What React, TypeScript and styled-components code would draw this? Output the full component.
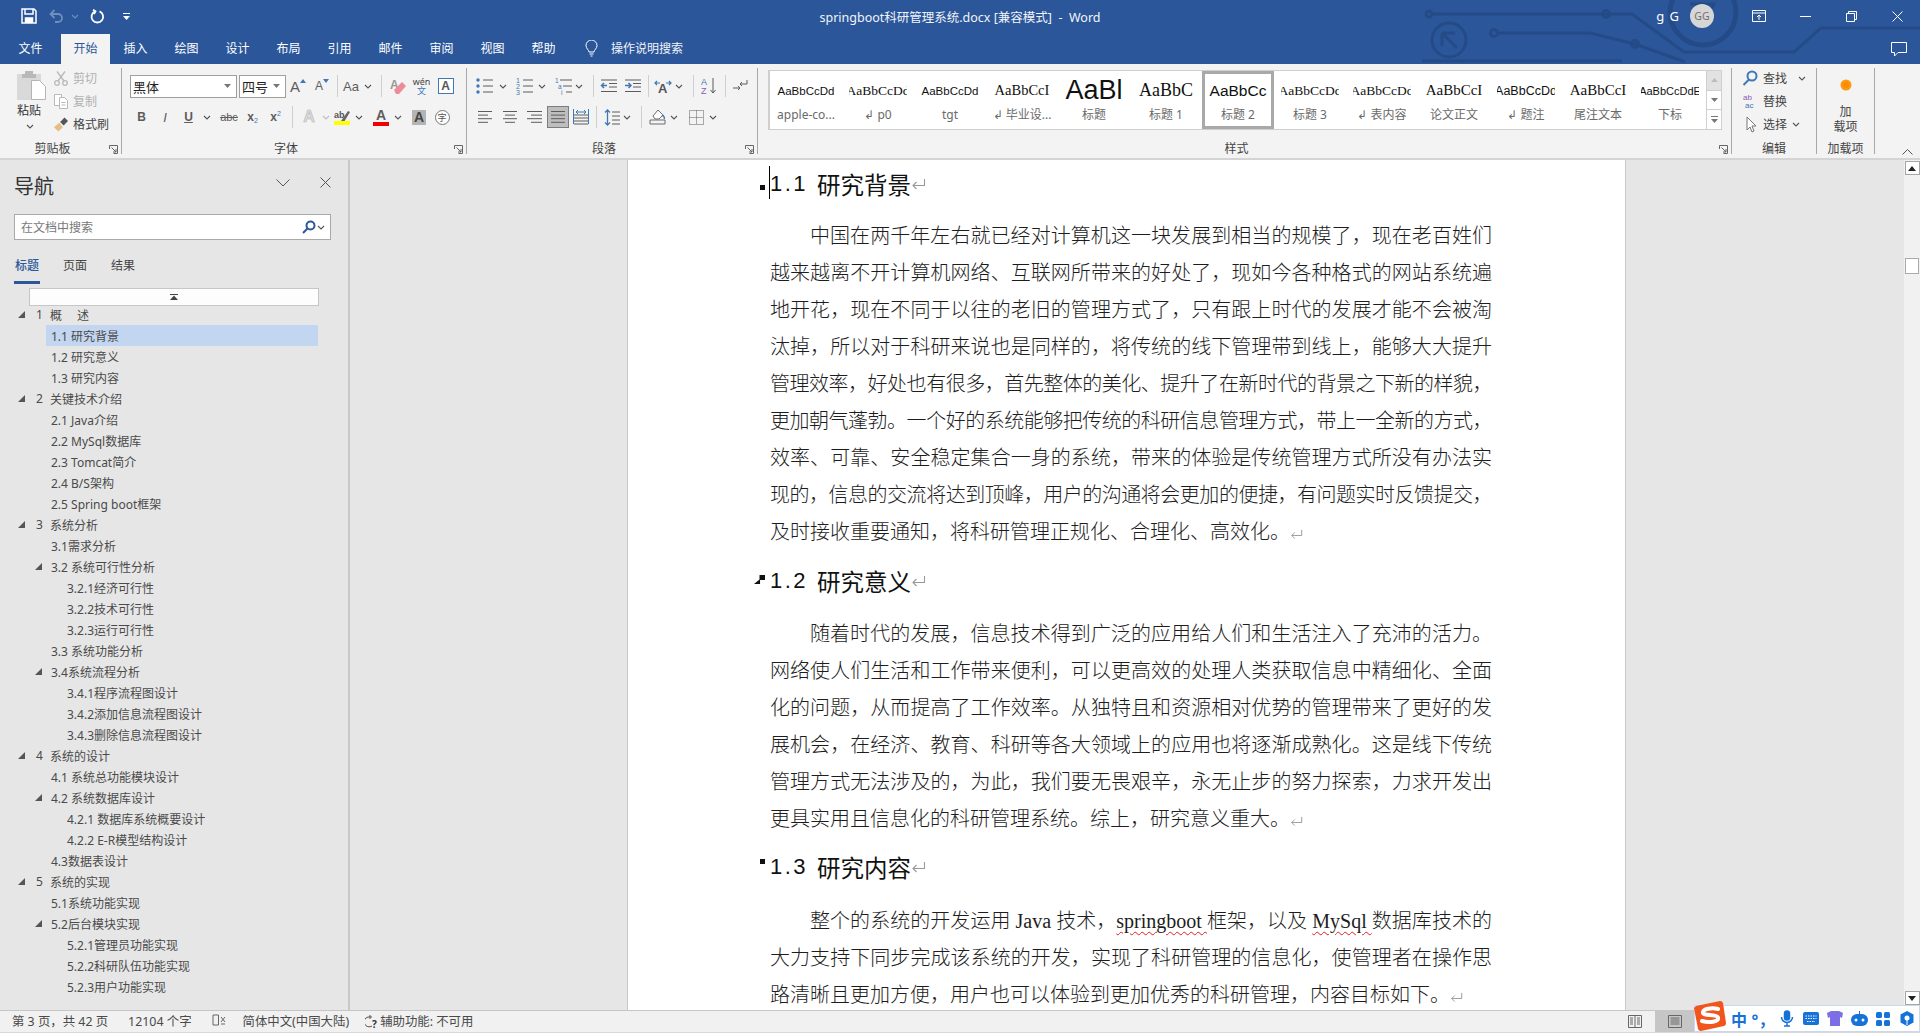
import React from 'react';
import styled, { createGlobalStyle } from 'styled-components';

const UI = `"Noto Sans", "Noto Sans CJK SC", sans-serif`;
const SERIF = `"Liberation Serif", "Noto Sans CJK SC", serif`;
const BLUE = '#2b579a';
const ICON_BLUE = '#3f78b5';
const GREY = '#5c5c5c';

const Global = createGlobalStyle`
  html, body { margin: 0; height: 100%; overflow: hidden; }
  body { font-family: ${UI}; font-size: 12px; color: #444; background: #e6e6e6; }
  * { box-sizing: border-box; }
`;

const App_ = styled.div`
  height: 100vh;
  display: flex;
  flex-direction: column;
  overflow: hidden;
  position: relative;
`;

/* title bar */
const TopBar = styled.header`
  height: 64px;
  flex: none;
  background: ${BLUE};
  color: #fff;
  position: relative;
  overflow: hidden;
`;
const Circuit = styled.svg`
  position: absolute;
  right: 0;
  top: 0;
`;
const TitleRow = styled.div`
  height: 34px;
  padding-bottom: 2px;
  display: grid;
  grid-template-columns: 1fr auto 1fr;
  align-items: center;
  position: relative;
`;
const Qat = styled.div`
  display: flex;
  align-items: center;
  padding-left: 15px;
`;
const QatBtn = styled.span<{ $w: number }>`
  width: ${p => p.$w}px;
  display: flex;
  align-items: center;
  justify-content: center;
`;
const DocTitle = styled.div`
  font-size: 12.5px;
  color: #f1f4f9;
`;
const WinControls = styled.div`
  display: flex;
  align-items: center;
  justify-content: flex-end;
`;
const UserName = styled.span`
  font-size: 13px;
  letter-spacing: 1px;
  margin-right: 10px;
`;
const Avatar = styled.span`
  width: 24px;
  height: 24px;
  border-radius: 50%;
  background: #d6d6d6;
  color: #6f6f6f;
  font-size: 10.5px;
  display: flex;
  align-items: center;
  justify-content: center;
  margin-right: 22px;
`;
const WinBtn = styled.span`
  width: 46px;
  display: flex;
  justify-content: center;
`;
const TabRow = styled.nav`
  height: 30px;
  display: flex;
  align-items: stretch;
  position: relative;
`;
const Tab = styled.span<{ $active?: boolean; $w: number }>`
  width: ${p => p.$w}px;
  display: flex;
  align-items: center;
  justify-content: center;
  padding-bottom: 2px;
  font-size: 12px;
  color: ${p => (p.$active ? BLUE : '#fff')};
  background: ${p => (p.$active ? '#f3f3f3' : 'transparent')};
`;
const TellMe = styled.span`
  display: flex;
  align-items: center;
  gap: 13px;
  margin-left: 16px;
  padding-bottom: 2px;
  font-size: 12px;
  color: #f1f4f9;
`;
const CommentBtn = styled.span`
  margin-left: auto;
  margin-right: 13px;
  display: flex;
  align-items: center;
`;

/* ribbon */
const Ribbon = styled.section`
  height: 96px;
  flex: none;
  background: #f3f3f3;
  border-bottom: 2px solid #d4d4d4;
  display: flex;
  align-items: flex-start;
  padding-top: 4px;
  position: relative;
`;
const Group = styled.div<{ $w: number; $pl?: number }>`
  width: ${p => p.$w}px;
  height: 86px;
  flex: none;
  padding: 5px 0 0 ${p => p.$pl ?? 0}px;
  border-right: 1px solid #a8a8a8;
  display: flex;
  flex-direction: column;
  position: relative;
`;
const GroupLabel = styled.div<{ $plain?: boolean }>`
  position: absolute;
  left: 0;
  right: 0;
  bottom: -3px;
  padding-right: ${p => (p.$plain ? 0 : 16)}px;
  text-align: center;
  font-size: 12px;
  line-height: 16px;
  color: #444;
`;
const Launcher = styled.span`
  position: absolute;
  right: 3px;
  bottom: 0;
  display: flex;
`;
const ToolRows = styled.div`
  display: flex;
  flex-direction: column;
  gap: 5px;
`;
const ToolRow = styled.div`
  height: 26px;
  display: flex;
  align-items: center;
`;
const Tool = styled.span<{ $w?: number; $ml?: number; $active?: boolean }>`
  width: ${p => p.$w ?? 20}px;
  height: ${p => (p.$active ? '22px' : 'auto')};
  margin-left: ${p => p.$ml ?? 0}px;
  flex: none;
  display: flex;
  align-items: center;
  justify-content: center;
  background: ${p => (p.$active ? '#bebebe' : 'transparent')};
  border: ${p => (p.$active ? '1px solid #7d7d7d' : 'none')};
`;
const Sep = styled.span<{ $ml: number }>`
  width: 1px;
  height: 22px;
  flex: none;
  margin-left: ${p => p.$ml}px;
  background: #cfcfcf;
`;
const Select = styled.span<{ $w: number; $ml?: number }>`
  width: ${p => p.$w}px;
  height: 23px;
  flex: none;
  margin-left: ${p => p.$ml ?? 0}px;
  background: #fff;
  border: 1px solid #9f9f9f;
  display: flex;
  align-items: center;
  justify-content: space-between;
  padding: 0 5px 0 2px;
  font-size: 13px;
  color: #222;
`;
const Glyph = styled.span<{ $size?: number; $weight?: number; $color?: string; $italic?: boolean; $deco?: string; $shift?: number }>`
  font-size: ${p => p.$size ?? 14}px;
  font-weight: ${p => p.$weight ?? 400};
  font-style: ${p => (p.$italic ? 'italic' : 'normal')};
  color: ${p => p.$color ?? GREY};
  text-decoration: ${p => p.$deco ?? 'none'};
  margin-top: ${p => p.$shift ?? 0}px;
  line-height: 1;
  font-family: "Liberation Sans", "Noto Sans CJK SC", sans-serif;
`;
const GhostA = styled(Glyph)`
  -webkit-text-stroke: 0.6px #b5b5b5;
`;
const ColorA = styled.span<{ $bar: string }>`
  display: flex;
  flex-direction: column;
  align-items: center;
  width: 16px;
  font: 700 14px/13px "Liberation Sans", sans-serif;
  color: ${GREY};
  &::after {
    content: '';
    width: 16px;
    height: 4px;
    background: ${p => p.$bar};
  }
`;
const ShadedA = styled.span`
  width: 14px;
  height: 15px;
  background: #b4b4b4;
  color: #444;
  font: 700 14px/15px "Liberation Sans", sans-serif;
  text-align: center;
`;
const BoxedA = styled.span`
  width: 16px;
  height: 16px;
  background: #fff;
  border: 1px solid ${ICON_BLUE};
  color: #555;
  font: 700 12px/14px "Liberation Sans", sans-serif;
  text-align: center;
`;
const Ruby = styled.span`
  display: flex;
  flex-direction: column;
  align-items: center;
  font-size: 9px;
  line-height: 9px;
  color: #444;
  & > b {
    font-weight: 400;
    color: ${ICON_BLUE};
  }
`;
const CircledZi = styled.span`
  width: 15px;
  height: 15px;
  border-radius: 50%;
  border: 1px solid #777;
  background: #fff;
  font-size: 9px;
  line-height: 13px;
  text-align: center;
  color: #555;
`;
const ArrowTip = styled.svg`
  margin-bottom: 11px;
`;

const ClipBody = styled.div`
  display: flex;
  padding-left: 17px;
  margin-top: -3px;
`;
const PasteCol = styled.div`
  width: 37px;
  display: flex;
  flex-direction: column;
  align-items: flex-start;
  font-size: 12px;
  color: #333;
  line-height: 14px;
  & > b {
    font-weight: 400;
    margin-top: 4px;
  }
  & > svg:last-child {
    margin: 6px 0 0 9px;
  }
`;
const SmallCmds = styled.div`
  display: flex;
  flex-direction: column;
  gap: 7px;
`;
const SmallCmd = styled.div<{ $off?: boolean; $gap?: number }>`
  height: 16px;
  display: flex;
  align-items: center;
  gap: ${p => p.$gap ?? 5}px;
  font-size: 12px;
  color: ${p => (p.$off ? '#b1b1b1' : '#444')};
`;

const Gallery = styled.div`
  margin: -3px 0 0 10px;
  width: 954px;
  height: 60px;
  display: flex;
  background: #fff;
  border: 1px solid #cfcfcf;
  border-left-width: 2px;
`;
const StyleItem = styled.div<{ $selected?: boolean }>`
  width: 72px;
  flex: none;
  height: 100%;
  display: flex;
  flex-direction: column;
  align-items: center;
  outline: ${p => (p.$selected ? '3px solid #a9a9a9' : 'none')};
  outline-offset: -3px;
`;
const Preview = styled.div<{ $size: number; $serif?: boolean }>`
  width: 58px;
  height: 33px;
  display: flex;
  align-items: center;
  justify-content: center;
  overflow: hidden;
  white-space: nowrap;
  margin-top: 3px;
  color: #111;
  font-size: ${p => p.$size}px;
  font-family: ${p => (p.$serif ? '"Liberation Serif", serif' : '"Liberation Sans", sans-serif')};
`;
const StyleName = styled.div`
  font-size: 12px;
  line-height: 16px;
  color: #6a6a6a;
  white-space: nowrap;
`;
const GalleryScroll = styled.div`
  margin-left: auto;
  width: 16px;
  display: flex;
  flex-direction: column;
  border-left: 1px solid #cfcfcf;
`;
const ScrollCell = styled.span<{ $off?: boolean }>`
  flex: 1;
  display: flex;
  align-items: center;
  justify-content: center;
  background: ${p => (p.$off ? '#e2e2e2' : '#fff')};
  & + & {
    border-top: 1px solid #cfcfcf;
  }
`;
const EditCol = styled.div`
  display: flex;
  flex-direction: column;
  gap: 7px;
  padding-left: 10px;
  margin-top: -3px;
`;
const AddInCol = styled.div`
  display: flex;
  flex-direction: column;
  align-items: center;
  font-size: 12px;
  line-height: 15px;
  color: #444;
  padding-top: 6px;
  & > svg {
    margin-bottom: 13px;
  }
`;
const Collapse = styled.span`
  position: absolute;
  right: 7px;
  bottom: 3px;
  display: flex;
`;

/* main area */
const Main = styled.main`
  flex: 1;
  min-height: 0;
  display: flex;
`;
const NavPane = styled.aside`
  width: 350px;
  flex: none;
  background: #e6e6e6;
  border-right: 2px solid #c8c8c8;
  padding: 0 0 0 14px;
  display: flex;
  flex-direction: column;
`;
const NavHead = styled.div`
  height: 54px;
  display: flex;
  align-items: center;
  padding: 0 17px 4px 0;
  color: #333;
`;
const NavTitle = styled.h2`
  margin: 0 auto 0 0;
  font-size: 20px;
  font-weight: 400;
  color: #333;
`;
const NavHeadBtn = styled.span`
  display: flex;
  margin: 0 0 5px 30px;
`;
const SearchBox = styled.div`
  width: 317px;
  height: 26px;
  background: #fff;
  border: 1px solid #a9a9a9;
  display: flex;
  align-items: center;
  padding: 0 5px 0 6px;
  font-size: 12px;
  color: #787878;
`;
const SearchHint = styled.span`
  margin-right: auto;
`;
const NavTabs = styled.div`
  height: 44px;
  display: flex;
  gap: 22px;
  padding-top: 17px;
`;
const NavTab = styled.span<{ $active?: boolean }>`
  width: 26px;
  height: 27px;
  font-size: 12px;
  line-height: 18px;
  text-align: center;
  color: ${p => (p.$active ? BLUE : '#444')};
  font-weight: ${p => (p.$active ? 500 : 400)};
  border-bottom: 3px solid ${p => (p.$active ? BLUE : 'transparent')};
`;
const CollapseBar = styled.div`
  width: 290px;
  height: 18px;
  margin: 4px 0 0 15px;
  background: #fdfdfd;
  border: 1px solid #c6c6c6;
  display: flex;
  align-items: center;
  justify-content: center;
  flex: none;
`;
const Tree = styled.ul`
  list-style: none;
  margin: -2px 0 0 -14px;
  padding: 0;
`;
const TreeRow = styled.li<{ $level: number; $selected?: boolean }>`
  height: 21px;
  width: 272px;
  margin-left: ${p => (p.$level === 0 ? 14 : 46)}px;
  padding-left: ${p => (p.$level === 0 ? 22 : p.$level === 1 ? 5 : 21)}px;
  display: flex;
  align-items: center;
  white-space: pre;
  font-size: 12px;
  color: #4a4a4a;
  background: ${p => (p.$selected ? '#c2d5f1' : 'transparent')};
  position: relative;
`;
const Expander = styled.svg<{ $level: number }>`
  position: absolute;
  left: ${p => (p.$level === 0 ? 4 : -11)}px;
  top: 7px;
`;
const TreeNum = styled.span`
  width: 14px;
  flex: none;
`;
const DocArea = styled.div`
  flex: 1;
  min-width: 0;
  background: #e6e6e6;
  padding-left: 277px;
  overflow: hidden;
`;
const Page = styled.article`
  width: 999px;
  height: 100%;
  background: #fff;
  border: 1px solid #c8c8c8;
  border-width: 0 1px;
  padding: 5px 0 0 142px;
  font-family: ${SERIF};
  color: #1d1d1d;
  overflow: hidden;
`;
const Heading = styled.h1<{ $above: number; $below: number }>`
  margin: ${p => p.$above}px 0 ${p => p.$below}px;
  height: 37px;
  display: flex;
  align-items: center;
  font-size: 23.5px;
  font-weight: 400;
  color: #111;
  font-family: "Liberation Sans", "Noto Sans CJK SC", sans-serif;
  position: relative;
`;
const HeadNum = styled.span`
  font-size: 22px;
  letter-spacing: 2.5px;
  margin-right: 9px;
`;
const KeepMark = styled.i<{ $top: number; $arrow?: boolean }>`
  position: absolute;
  left: ${p => (p.$arrow ? -16 : -10)}px;
  top: ${p => p.$top}px;
  width: ${p => (p.$arrow ? 11 : 5)}px;
  height: ${p => (p.$arrow ? 9 : 5)}px;
  background: #111;
  clip-path: ${p => (p.$arrow ? 'polygon(0 100%, 55% 100%, 55% 55%, 100% 55%, 100% 0, 50% 0, 50% 50%)' : 'none')};
`;
const Caret = styled.i`
  position: absolute;
  left: -1px;
  top: 1px;
  width: 1px;
  height: 33px;
  background: #000;
`;
const Para = styled.div`
  width: 722px;
`;
const Line = styled.div<{ $indent?: boolean; $last?: boolean; $tight?: boolean }>`
  height: 37px;
  line-height: 37px;
  font-size: 20px;
  font-weight: 300;
  text-indent: ${p => (p.$indent ? '40px' : 0)};
  text-align: justify;
  text-align-last: ${p => (p.$last ? 'left' : 'justify')};
  letter-spacing: ${p => (p.$tight ? '-0.6px' : 0)};
`;
const Spell = styled.span`
  text-decoration: underline wavy #e02020;
  text-decoration-thickness: 1px;
  text-underline-offset: 3px;
`;
const Scrollbar = styled.div`
  width: 16px;
  flex: none;
  background: #f1f1f1;
  display: flex;
  flex-direction: column;
  align-items: center;
  padding: 1px 0 5px;
`;
const ScrollBtn = styled.span`
  width: 15px;
  height: 14px;
  flex: none;
  background: #fff;
  border: 1px solid #a6a6a6;
  display: flex;
  align-items: center;
  justify-content: center;
`;
const Thumb = styled.span`
  width: 14px;
  height: 16px;
  background: #fff;
  border: 1px solid #ababab;
  margin: 83px 0 auto;
`;

/* status bar */
const Status = styled.footer`
  height: 23px;
  flex: none;
  background: #f1f1f1;
  border-top: 1px solid #c6c6c6;
  border-bottom: 1px solid #d8d8d8;
  display: flex;
  align-items: center;
  font-size: 12.4px;
  color: #4a4a4a;
  padding: 0 0 2px 12px;
  position: relative;
  white-space: nowrap;
`;
const StatusItem = styled.span<{ $ml?: number; $gap?: number }>`
  margin-left: ${p => p.$ml ?? 0}px;
  display: flex;
  align-items: center;
  gap: ${p => p.$gap ?? 4}px;
`;
const Views = styled.div`
  position: absolute;
  left: 1620px;
  top: 0;
  bottom: 0;
  display: flex;
  gap: 5px;
`;
const ViewBtn = styled.span<{ $active?: boolean; $w: number }>`
  width: ${p => p.$w}px;
  height: 100%;
  display: flex;
  align-items: center;
  justify-content: center;
  background: ${p => (p.$active ? '#c6c6c6' : 'transparent')};
`;
const Sogou = styled.div`
  position: absolute;
  right: 0;
  bottom: 0;
  width: 226px;
  height: 27px;
  background: #fff;
  border: 1px solid #c9d8ec;
  display: flex;
  align-items: center;
  padding-left: 32px;
`;
const SogouLogo = styled.svg`
  position: absolute;
  left: -2px;
  bottom: -1px;
`;
const SogouCell = styled.span`
  width: 24px;
  flex: none;
  display: flex;
  align-items: center;
  justify-content: center;
  color: #1472d8;
  font-size: 16px;
  font-weight: 700;
`;

/* small icons */
const Chev = ({ c = '#555' }: { c?: string }) => (
  <svg width="8" height="5" viewBox="0 0 8 5"><path d="M1 1l3 3 3-3" fill="none" stroke={c} strokeWidth="1.1" /></svg>
);
const Arrow = () => (
  <svg width="7" height="4" viewBox="0 0 7 4"><path d="M0 0h7L3.5 4z" fill="#777" /></svg>
);
const LaunchIcon = () => (
  <svg width="9" height="9" viewBox="0 0 9 9" fill="none" stroke="#666"><path d="M.5 4V.5H8.500V8.500H4.500M2.500 2.500l4.500 4.500M7 4v3H4" /></svg>
);
const ReturnMark = ({ s = 15 }: { s?: number }) => (
  <svg width={s} height={s * 0.8} viewBox="0 0 15 12" fill="none" stroke="#9a9a9a" strokeWidth="1.1"><path d="M13.500 1v6.500H2M5.500 4L2 7.500l3.500 3.500" /></svg>
);
const Lines = ({ rows }: { rows: [number, number][] }) => (
  <svg width="18" height="14" viewBox="0 0 18 14" stroke={GREY}>
    {rows.map(([a, b], i) => <path key={i} d={`M${a} ${1.5 + i * 3.6}H${b}`} />)}
  </svg>
);
const ListIcon = ({ kind }: { kind: 'dot' | 'num' | 'multi' }) => (
  <svg width="20" height="20" viewBox="0 0 20 20">
    {[4, 10, 16].map((y, i) => (
      <g key={y}>
        {kind === 'dot' && <circle cx="3" cy={y} r="1.700" fill={ICON_BLUE} />}
        {kind === 'num' && <text x="1" y={y + 2.500} fontSize="7" fill={ICON_BLUE} fontFamily="Liberation Sans">{i + 1}</text>}
        {kind === 'multi' && <text x={1 + i * 3} y={y + 2.500} fontSize="6.500" fill={ICON_BLUE} fontFamily="Liberation Sans">{['1', 'a', 'i'][i]}</text>}
        <path d={`M${kind === 'multi' ? 6 + i * 3 : 8} ${y}H18`} stroke={GREY} />
      </g>
    ))}
  </svg>
);
const IndentIcon = ({ out }: { out?: boolean }) => (
  <svg width="18" height="14" viewBox="0 0 18 14" fill="none">
    <path d="M1 1h16M9 4.500h8M9 8h8M1 12.500h16" stroke={GREY} />
    <path d={out ? 'M7 6.500H1.500M4 4L1.500 6.500 4 9' : 'M1 6.500h6M4.500 4L7 6.500 4.500 9'} stroke={ICON_BLUE} strokeWidth="1.500" />
  </svg>
);

const styleItems = [
  { p: 'AaBbCcDd', n: 'apple-co...', s: 11.5 },
  { p: 'AaBbCcDd', n: 'p0', s: 13.5, serif: true, m: true },
  { p: 'AaBbCcDd', n: 'tgt', s: 11.5 },
  { p: 'AaBbCcI', n: '毕业设...', s: 14.5, serif: true, m: true },
  { p: 'AaBl', n: '标题', s: 27 },
  { p: 'AaBbC', n: '标题 1', s: 18, serif: true },
  { p: 'AaBbCc', n: '标题 2', s: 15.5, sel: true },
  { p: 'AaBbCcDd', n: '标题 3', s: 13.5, serif: true },
  { p: 'AaBbCcDd', n: '表内容', s: 13.5, serif: true, m: true },
  { p: 'AaBbCcI', n: '论文正文', s: 15, serif: true },
  { p: 'AaBbCcDd', n: '题注', s: 12.5, m: true },
  { p: 'AaBbCcI', n: '尾注文本', s: 15, serif: true },
  { p: 'AaBbCcDdE', n: '下标', s: 11 },
];

type Node = { l: number; t: string; n?: string; open?: boolean; sel?: boolean };
const tree: Node[] = [
  { l: 0, n: '1', t: '概　 述', open: true },
  { l: 1, t: '1.1 研究背景', sel: true },
  { l: 1, t: '1.2 研究意义' },
  { l: 1, t: '1.3 研究内容' },
  { l: 0, n: '2', t: '关键技术介绍', open: true },
  { l: 1, t: '2.1 Java介绍' },
  { l: 1, t: '2.2 MySql数据库' },
  { l: 1, t: '2.3 Tomcat简介' },
  { l: 1, t: '2.4 B/S架构' },
  { l: 1, t: '2.5 Spring boot框架' },
  { l: 0, n: '3', t: '系统分析', open: true },
  { l: 1, t: '3.1需求分析' },
  { l: 1, t: '3.2 系统可行性分析', open: true },
  { l: 2, t: '3.2.1经济可行性' },
  { l: 2, t: '3.2.2技术可行性' },
  { l: 2, t: '3.2.3运行可行性' },
  { l: 1, t: '3.3 系统功能分析' },
  { l: 1, t: '3.4系统流程分析', open: true },
  { l: 2, t: '3.4.1程序流程图设计' },
  { l: 2, t: '3.4.2添加信息流程图设计' },
  { l: 2, t: '3.4.3删除信息流程图设计' },
  { l: 0, n: '4', t: '系统的设计', open: true },
  { l: 1, t: '4.1 系统总功能模块设计' },
  { l: 1, t: '4.2 系统数据库设计', open: true },
  { l: 2, t: '4.2.1 数据库系统概要设计' },
  { l: 2, t: '4.2.2 E-R模型结构设计' },
  { l: 1, t: '4.3数据表设计' },
  { l: 0, n: '5', t: '系统的实现', open: true },
  { l: 1, t: '5.1系统功能实现' },
  { l: 1, t: '5.2后台模块实现', open: true },
  { l: 2, t: '5.2.1管理员功能实现' },
  { l: 2, t: '5.2.2科研队伍功能实现' },
  { l: 2, t: '5.2.3用户功能实现' },
];

const para1 = [
  '中国在两千年左右就已经对计算机这一块发展到相当的规模了，现在老百姓们',
  '越来越离不开计算机网络、互联网所带来的好处了，现如今各种格式的网站系统遍',
  '地开花，现在不同于以往的老旧的管理方式了，只有跟上时代的发展才能不会被淘',
  '汰掉，所以对于科研来说也是同样的，将传统的线下管理带到线上，能够大大提升',
  '管理效率，好处也有很多，首先整体的美化、提升了在新时代的背景之下新的样貌，',
  '更加朝气蓬勃。一个好的系统能够把传统的科研信息管理方式，带上一全新的方式，',
  '效率、可靠、安全稳定集合一身的系统，带来的体验是传统管理方式所没有办法实',
  '现的，信息的交流将达到顶峰，用户的沟通将会更加的便捷，有问题实时反馈提交，',
  '及时接收重要通知，将科研管理正规化、合理化、高效化。',
];
const para2 = [
  '随着时代的发展，信息技术得到广泛的应用给人们和生活注入了充沛的活力。',
  '网络使人们生活和工作带来便利，可以更高效的处理人类获取信息中精细化、全面',
  '化的问题，从而提高了工作效率。从独特且和资源相对优势的管理带来了更好的发',
  '展机会，在经济、教育、科研等各大领域上的应用也将逐渐成熟化。这是线下传统',
  '管理方式无法涉及的，为此，我们要无畏艰辛，永无止步的努力探索，力求开发出',
  '更具实用且信息化的科研管理系统。综上，研究意义重大。',
];

const Paragraph = ({ lines }: { lines: string[] }) => (
  <Para>
    {lines.map((t, i) => (
      <Line key={i} $indent={i === 0} $last={i === lines.length - 1} $tight={t.length > 36}>
        {t}
        {i === lines.length - 1 && <ReturnMark s={13} />}
      </Line>
    ))}
  </Para>
);

const tabs = ['插入', '绘图', '设计', '布局', '引用', '邮件', '审阅', '视图', '帮助'];

export default function App() {
  return (
    <App_>
      <Global />
      <TopBar>
        <Circuit width="520" height="64" viewBox="0 0 520 64" fill="none" stroke="#244b87" strokeWidth="3">
          <circle cx="29" cy="14" r="3" />
          <path d="M32 14h200l52 38h110l27-24h100" />
          <circle cx="206" cy="14" r="3.500" />
          <circle cx="94" cy="33" r="3.500" />
          <path d="M97 33h93l45 11 50 18" />
          <circle cx="235" cy="44" r="3.500" />
          <path d="M22 61h200" />
          <circle cx="49" cy="40" r="17" />
          <path d="M42 33h13M42 33v13M42 33l15 15" />
          <circle cx="303" cy="12" r="33" strokeWidth="5" />
          <path d="M290 4h24l-10 22" />
        </Circuit>
        <TitleRow>
          <Qat>
            <QatBtn $w={28}>
              <svg width="16" height="16" viewBox="0 0 16 16" fill="none" stroke="#fff" strokeWidth="1.500"><path d="M1 1h12l2 2v12H1z" /><path d="M4 1v5h8V1" /><path d="M4.500 15v-5h7v5" fill="#fff" /></svg>
            </QatBtn>
            <QatBtn $w={27}>
              <svg width="16" height="14" viewBox="0 0 16 14" fill="none" stroke="#6f8fbe" strokeWidth="1.800"><path d="M5.500 1L1.500 5l4 4M2 5h7a4 4 0 010 8H6" /></svg>
            </QatBtn>
            <QatBtn $w={10}><Chev c="#6f8fbe" /></QatBtn>
            <QatBtn $w={34}>
              <svg width="15" height="15" viewBox="0 0 15 15" fill="none" stroke="#fff" strokeWidth="1.800"><path d="M9.500 2.300a5.800 5.800 0 11-4.300 0M3 .8l2.500 1.500L4 5" /></svg>
            </QatBtn>
            <QatBtn $w={24}>
              <svg width="7" height="7" viewBox="0 0 7 7"><path d="M0 0h7v1H0zM0 3h7L3.500 7z" fill="#fff" /></svg>
            </QatBtn>
          </Qat>
          <DocTitle>springboot科研管理系统.docx [兼容模式]&nbsp; -&nbsp; Word</DocTitle>
          <WinControls>
            <UserName>g G</UserName>
            <Avatar>GG</Avatar>
            <WinBtn>
              <svg width="14" height="12" viewBox="0 0 14 12" fill="none" stroke="#fff"><path d="M.5.500h13v11H.500zM.5 3h13M7 10V5M5 7l2-2 2 2" /></svg>
            </WinBtn>
            <WinBtn><svg width="11" height="1" viewBox="0 0 11 1"><path d="M0 .5h11" stroke="#fff" /></svg></WinBtn>
            <WinBtn>
              <svg width="11" height="11" viewBox="0 0 11 11" fill="none" stroke="#fff"><path d="M.5 2.500h8v8h-8zM2.500 2.500v-2h8v8h-2" /></svg>
            </WinBtn>
            <WinBtn>
              <svg width="11" height="11" viewBox="0 0 11 11" fill="none" stroke="#fff"><path d="M.5.500l10 10M10.500.500l-10 10" /></svg>
            </WinBtn>
          </WinControls>
        </TitleRow>
        <TabRow>
          <Tab $w={61}>文件</Tab>
          <Tab $w={49} $active>开始</Tab>
          {tabs.map(t => <Tab key={t} $w={51}>{t}</Tab>)}
          <TellMe>
            <svg width="13" height="17" viewBox="0 0 13 17" fill="none" stroke="#fff"><path d="M4 12c0-2-3-3.500-3-6.500a5.500 5.500 0 0111 0C12 8.500 9 10 9 12zM4.500 14h4M5.500 16h2" /></svg>
            操作说明搜索
          </TellMe>
          <CommentBtn>
            <svg width="16" height="15" viewBox="0 0 16 15" fill="none" stroke="#fff"><path d="M.5.500h15v10H7L3.500 14v-3.500h-3z" /></svg>
          </CommentBtn>
        </TabRow>
      </TopBar>

      <Ribbon>
        <Group $w={122}>
          <ClipBody>
            <PasteCol>
              <svg width="29" height="30" viewBox="0 0 29 30">
                <path d="M0 4h24v26H0z" fill="#d9d9d9" />
                <path d="M8 1h8v3h3v4H5V4h3z" fill="#b9b9b9" />
                <path d="M14.500 10.500h8l6 6v13h-14z" fill="#fff" stroke="#b5b5b5" />
              </svg>
              <b>粘贴</b>
              <Chev />
            </PasteCol>
            <SmallCmds>
              <SmallCmd $off>
                <svg width="14" height="15" viewBox="0 0 14 15" fill="none" stroke="#b9b9b9" strokeWidth="1.300"><circle cx="3" cy="12" r="2.300" /><circle cx="11" cy="12" r="2.300" /><path d="M4 10L11 .5M10 10L3 .5" /></svg>
                剪切
              </SmallCmd>
              <SmallCmd $off>
                <svg width="14" height="15" viewBox="0 0 14 15" fill="#fff" stroke="#b9b9b9"><path d="M.5.500h7v11h-7z" /><path d="M5.500 3.500h5l3 3v8h-8z" /><path d="M7.500 8.500h4M7.500 11h4" /></svg>
                复制
              </SmallCmd>
              <SmallCmd>
                <svg width="14" height="15" viewBox="0 0 16 16"><path d="M0 11l6-5 4 5-5 5z" fill="#e8bc85" /><path d="M7 5l5-5 4 4-5 5z" fill="#555" /></svg>
                格式刷
              </SmallCmd>
            </SmallCmds>
          </ClipBody>
          <GroupLabel>剪贴板</GroupLabel>
          <Launcher><LaunchIcon /></Launcher>
        </Group>

        <Group $w={345} $pl={8}>
          <ToolRows>
            <ToolRow>
              <Select $w={107}>黑体<Arrow /></Select>
              <Select $w={47} $ml={2}>四号<Arrow /></Select>
              <Tool $w={24}><Glyph $size={15}>A</Glyph><ArrowTip width="6" height="4" viewBox="0 0 6 4"><path d="M0 4l3-4 3 4z" fill={ICON_BLUE} /></ArrowTip></Tool>
              <Tool $w={24}><Glyph $size={12}>A</Glyph><ArrowTip width="6" height="4" viewBox="0 0 6 4"><path d="M0 0h6L3 4z" fill={ICON_BLUE} /></ArrowTip></Tool>
              <Sep $ml={3} />
              <Tool $w={22} $ml={2}><Glyph $size={13}>Aa</Glyph></Tool>
              <Tool $w={12}><Chev /></Tool>
              <Sep $ml={7} />
              <Tool $w={22} $ml={5}>
                <svg width="17" height="17" viewBox="0 0 17 17"><text x="0" y="11" fontSize="12" fontWeight="700" fill="#999" fontFamily="Liberation Sans">A</text><path d="M4 12l8-8 4 4-7 8H6z" fill="#ee8b96" /></svg>
              </Tool>
              <Tool $w={23} $ml={1}><Ruby>wén<b>文</b></Ruby></Tool>
              <Tool $w={23} $ml={1}><BoxedA>A</BoxedA></Tool>
            </ToolRow>
            <ToolRow>
              <Tool $w={23}><Glyph $weight={700} $size={12}>B</Glyph></Tool>
              <Tool $w={24}><Glyph $italic $size={13}>I</Glyph></Tool>
              <Tool $w={23}><Glyph $weight={700} $size={12} $deco="underline">U</Glyph></Tool>
              <Tool $w={14}><Chev /></Tool>
              <Tool $w={24} $ml={3}><Glyph $size={11} $deco="line-through">abc</Glyph></Tool>
              <Tool $w={23}><Glyph $weight={700} $size={12}>x</Glyph><Glyph $size={7} $color={ICON_BLUE} $shift={7}>2</Glyph></Tool>
              <Tool $w={23}><Glyph $weight={700} $size={12}>x</Glyph><Glyph $size={7} $color={ICON_BLUE} $shift={-7}>2</Glyph></Tool>
              <Sep $ml={5} />
              <Tool $w={22} $ml={5}><GhostA $size={16} $weight={700} $color="#dcdcdc">A</GhostA></Tool>
              <Tool $w={11}><Chev c="#bdbdbd" /></Tool>
              <Tool $w={22}><ColorA $bar="#ffff00"><svg width="16" height="12" viewBox="0 0 16 12"><text x="0" y="9" fontSize="9" fill="#555" fontFamily="Liberation Sans">ab</text><path d="M7 12l7-10 2 1-6 10z" fill="#666" /></svg></ColorA></Tool>
              <Tool $w={12}><Chev /></Tool>
              <Tool $w={22} $ml={5}><ColorA $bar="#f00000">A</ColorA></Tool>
              <Tool $w={12}><Chev /></Tool>
              <Tool $w={20} $ml={5}><ShadedA>A</ShadedA></Tool>
              <Tool $w={20} $ml={3}><CircledZi>字</CircledZi></Tool>
            </ToolRow>
          </ToolRows>
          <GroupLabel>字体</GroupLabel>
          <Launcher><LaunchIcon /></Launcher>
        </Group>

        <Group $w={291} $pl={8}>
          <ToolRows>
            <ToolRow>
              <Tool><ListIcon kind="dot" /></Tool>
              <Tool $w={16}><Chev /></Tool>
              <Tool $ml={4}><ListIcon kind="num" /></Tool>
              <Tool $w={14}><Chev /></Tool>
              <Tool $ml={5}><ListIcon kind="multi" /></Tool>
              <Tool $w={10}><Chev /></Tool>
              <Sep $ml={9} />
              <Tool $ml={5}><IndentIcon out /></Tool>
              <Tool $ml={4}><IndentIcon /></Tool>
              <Sep $ml={5} />
              <Tool $ml={4}>
                <svg width="18" height="15" viewBox="0 0 18 15"><text x="4" y="14" fontSize="13" fontWeight="700" fill="#555" fontFamily="Liberation Sans">A</text><path d="M1 4h5M3 2L1 4l2 2M17 4h-5M15 2l2 2-2 2" fill="none" stroke={ICON_BLUE} strokeWidth="1.200" /></svg>
              </Tool>
              <Tool $w={12}><Chev /></Tool>
              <Sep $ml={8} />
              <Tool $ml={5}>
                <svg width="16" height="18" viewBox="0 0 16 18"><text x="0" y="8" fontSize="9" fill={ICON_BLUE} fontFamily="Liberation Sans">A</text><text x="0" y="17" fontSize="9" fill="#8f5cb0" fontFamily="Liberation Sans">Z</text><path d="M12 1v15M9.500 13l2.500 3 2.500-3" fill="none" stroke={GREY} /></svg>
              </Tool>
              <Sep $ml={6} />
              <Tool $ml={4}>
                <svg width="16" height="14" viewBox="0 0 16 14" fill="none" stroke={GREY}><path d="M15 1v4H8M10 3L8 5l2 2M1 9h7M6 7l2 2-2 2" /></svg>
              </Tool>
            </ToolRow>
            <ToolRow>
              <Tool $ml={1}><Lines rows={[[1, 15], [1, 11], [1, 15], [1, 11]]} /></Tool>
              <Tool $ml={4}><Lines rows={[[2, 16], [4, 14], [2, 16], [4, 14]]} /></Tool>
              <Tool $ml={4}><Lines rows={[[2, 17], [6, 17], [2, 17], [6, 17]]} /></Tool>
              <Tool $w={22} $ml={3} $active><Lines rows={[[2, 16], [2, 16], [2, 16], [2, 16]]} /></Tool>
              <Tool $ml={2}>
                <svg width="16" height="16" viewBox="0 0 16 16" fill="none"><path d="M1 6h14M1 9h14M1 12h14M1 15h14" stroke={GREY} /><path d="M.5 0v15M15.500 0v15M3 3h10M5 1L3 3l2 2M11 1l2 2-2 2" stroke={ICON_BLUE} /></svg>
              </Tool>
              <Sep $ml={5} />
              <Tool $ml={5}>
                <svg width="16" height="17" viewBox="0 0 16 17" fill="none"><path d="M8 3h8M8 7h8M8 11h8M8 15h8" stroke={GREY} /><path d="M3.500 1v15M1 3.500L3.500 1 6 3.500M1 13.500L3.500 16 6 13.500" stroke={ICON_BLUE} strokeWidth="1.300" /></svg>
              </Tool>
              <Tool $w={14} $ml={-2}><Chev /></Tool>
              <Sep $ml={7} />
              <Tool $ml={5}>
                <svg width="17" height="16" viewBox="0 0 17 16" fill="none" stroke="#6d6d6d"><path d="M1 11h15v4H1z" /><path d="M4 7l5-6 5 5-4 4H6z" fill="#fff" /><path d="M13 6c2 1 3 3 2 4" stroke={ICON_BLUE} strokeWidth="1.500" /></svg>
              </Tool>
              <Tool $w={14}><Chev /></Tool>
              <Tool $ml={5}>
                <svg width="15" height="15" viewBox="0 0 15 15" fill="none" stroke={GREY} strokeDasharray="1 1"><path d="M.5.500h14v14H.500zM7.500.500v14M.5 7.500h14" /></svg>
              </Tool>
              <Tool $w={14}><Chev /></Tool>
            </ToolRow>
          </ToolRows>
          <GroupLabel>段落</GroupLabel>
          <Launcher><LaunchIcon /></Launcher>
        </Group>

        <Group $w={974}>
          <Gallery>
            {styleItems.map(s => (
              <StyleItem key={s.n} $selected={s.sel}>
                <Preview $size={s.s} $serif={s.serif}>{s.p}</Preview>
                <StyleName>{s.m && '↲ '}{s.n}</StyleName>
              </StyleItem>
            ))}
            <GalleryScroll>
              <ScrollCell $off><svg width="7" height="4" viewBox="0 0 7 4"><path d="M0 4h7L3.500 0z" fill="#bdbdbd" /></svg></ScrollCell>
              <ScrollCell><Arrow /></ScrollCell>
              <ScrollCell><svg width="7" height="7" viewBox="0 0 7 7"><path d="M0 0h7v1H0zM0 3h7L3.500 7z" fill="#777" /></svg></ScrollCell>
            </GalleryScroll>
          </Gallery>
          <GroupLabel>样式</GroupLabel>
          <Launcher><LaunchIcon /></Launcher>
        </Group>

        <Group $w={85}>
          <EditCol>
            <SmallCmd $gap={5}>
              <svg width="16" height="16" viewBox="0 0 16 16" fill="none" stroke={ICON_BLUE} strokeWidth="2"><circle cx="10" cy="6" r="4.500" /><path d="M7 9.500L1.500 15" /></svg>
              查找<Tool $w={13} $ml={3}><Chev /></Tool>
            </SmallCmd>
            <SmallCmd $gap={5}>
              <svg width="16" height="16" viewBox="0 0 16 16"><text x="1" y="7" fontSize="8" fill="#8a5bb0" fontFamily="Liberation Sans">ab</text><text x="3" y="15" fontSize="8" fill={ICON_BLUE} fontFamily="Liberation Sans">ac</text></svg>
              替换
            </SmallCmd>
            <SmallCmd $gap={5}>
              <svg width="16" height="17" viewBox="0 0 16 17" fill="#fff" stroke="#777"><path d="M5 1v13l3-3 2 5 2-1-2-5h4z" /></svg>
              选择<Chev />
            </SmallCmd>
          </EditCol>
          <GroupLabel $plain>编辑</GroupLabel>
        </Group>

        <Group $w={58}>
          <AddInCol>
            <svg width="12" height="12" viewBox="0 0 12 12"><circle cx="6" cy="6" r="5.500" fill="#fa9a14" /><circle cx="6" cy="6" r="3" fill="#ff8a00" /></svg>
            <span>加</span>
            <span>载项</span>
          </AddInCol>
          <GroupLabel $plain>加载项</GroupLabel>
        </Group>
        <Collapse>
          <svg width="11" height="6" viewBox="0 0 11 6"><path d="M.5 5.500l5-5 5 5" fill="none" stroke="#555" /></svg>
        </Collapse>
      </Ribbon>

      <Main>
        <NavPane>
          <NavHead>
            <NavTitle>导航</NavTitle>
            <NavHeadBtn><svg width="14" height="8" viewBox="0 0 14 8"><path d="M.5.500L7 7 13.500.500" fill="none" stroke="#555" /></svg></NavHeadBtn>
            <NavHeadBtn><svg width="11" height="11" viewBox="0 0 11 11"><path d="M.5.500l10 10M10.500.500l-10 10" stroke="#555" /></svg></NavHeadBtn>
          </NavHead>
          <SearchBox>
            <SearchHint>在文档中搜索</SearchHint>
            <svg width="14" height="14" viewBox="0 0 14 14" fill="none" stroke={BLUE} strokeWidth="2"><circle cx="8.500" cy="5.500" r="4" /><path d="M5.500 8.500L1 13" /></svg>
            <Tool $w={9}><Chev /></Tool>
          </SearchBox>
          <NavTabs>
            <NavTab $active>标题</NavTab>
            <NavTab>页面</NavTab>
            <NavTab>结果</NavTab>
          </NavTabs>
          <CollapseBar>
            <svg width="8" height="6" viewBox="0 0 8 6"><path d="M0 0h8v1H0zM4 1.500L8 6H0z" fill="#444" /></svg>
          </CollapseBar>
          <Tree>
            {tree.map(r => (
              <TreeRow key={r.t} $level={r.l} $selected={r.sel}>
                {r.open && (
                  <Expander $level={r.l} width="7" height="7" viewBox="0 0 7 7"><path d="M7 0v7H0z" fill="#555" /></Expander>
                )}
                {r.n && <TreeNum>{r.n}</TreeNum>}
                {r.t}
              </TreeRow>
            ))}
          </Tree>
        </NavPane>

        <DocArea>
          <Page>
            <Heading $above={0} $below={16}>
              <KeepMark $top={20} />
              <Caret />
              <HeadNum>1.1</HeadNum>研究背景<ReturnMark />
            </Heading>
            <Paragraph lines={para1} />
            <Heading $above={11} $below={17}>
              <KeepMark $top={13} $arrow />
              <HeadNum>1.2</HeadNum>研究意义<ReturnMark />
            </Heading>
            <Paragraph lines={para2} />
            <Heading $above={10} $below={18}>
              <KeepMark $top={11} />
              <HeadNum>1.3</HeadNum>研究内容<ReturnMark />
            </Heading>
            <Para>
              <Line $indent>整个的系统的开发运用 Java 技术，<Spell>springboot </Spell>框架，以及 <Spell>MySql </Spell>数据库技术的</Line>
              <Line>大力支持下同步完成该系统的开发，实现了科研管理的信息化，使管理者在操作思</Line>
              <Line $last>路清晰且更加方便，用户也可以体验到更加优秀的科研管理，内容目标如下。<ReturnMark s={13} /></Line>
            </Para>
          </Page>
        </DocArea>

        <Scrollbar>
          <ScrollBtn><svg width="8" height="5" viewBox="0 0 8 5"><path d="M0 5h8L4 0z" fill="#222" /></svg></ScrollBtn>
          <Thumb />
          <ScrollBtn><svg width="8" height="5" viewBox="0 0 8 5"><path d="M0 0h8L4 5z" fill="#222" /></svg></ScrollBtn>
        </Scrollbar>
      </Main>

      <Status>
        <StatusItem>第 3 页，共 42 页</StatusItem>
        <StatusItem $ml={20}>12104 个字</StatusItem>
        <StatusItem $ml={20}>
          <svg width="14" height="14" viewBox="0 0 14 14" fill="none" stroke="#666"><path d="M6.500 1H1v10h5.500zM6.500 1v10M9 3l4 5M13 3L9 8M9 10h4" /></svg>
        </StatusItem>
        <StatusItem $ml={17}>简体中文(中国大陆)</StatusItem>
        <StatusItem $ml={16} $gap={1}>
          <svg width="14" height="14" viewBox="0 0 14 14" fill="none" stroke="#555"><path d="M3 3a5 5 0 104 9M5 1v4M3 3h4" /><text x="7" y="14" fontSize="10" fontWeight="700" fill="#333" stroke="none">?</text></svg>
          辅助功能: 不可用
        </StatusItem>
        <Views>
          <ViewBtn $w={30}>
            <svg width="14" height="13" viewBox="0 0 14 13" fill="none" stroke="#666"><path d="M.5.500h13v12H.500zM7 .5v12M2 3h3M2 5h3M2 7h3M2 9h3M9 3h3M9 5h3M9 7h3M9 9h3" /></svg>
          </ViewBtn>
          <ViewBtn $w={40} $active>
            <svg width="14" height="13" viewBox="0 0 14 13" fill="none" stroke="#666"><path d="M.5.500h13v12H.500zM2.500 3h9M2.500 5h9M2.500 7h9M2.500 9h9" /></svg>
          </ViewBtn>
        </Views>
        <Sogou>
          <SogouLogo width="34" height="32" viewBox="0 0 34 32">
            <path d="M3 6l24-5a3 3 0 013 2l3 20a3 3 0 01-2 3L8 31a3 3 0 01-3-2L1 8z" fill="#f2541d" />
            <path d="M25 9c-6-2-16 0-15 4 1 3 15 1 15 5 1 4-9 5-16 3" fill="none" stroke="#fff" strokeWidth="4" strokeLinecap="round" />
          </SogouLogo>
          <SogouCell>中</SogouCell>
          <SogouCell>°，</SogouCell>
          <SogouCell>
            <svg width="14" height="17" viewBox="0 0 14 17" fill="none" stroke="#1472d8" strokeWidth="1.500"><rect x="4.500" y="1" width="5" height="9" rx="2.500" fill="#1472d8" /><path d="M1.500 7a5.500 5.500 0 0011 0M7 13v3M4 16h6" /></svg>
          </SogouCell>
          <SogouCell>
            <svg width="16" height="13" viewBox="0 0 16 13"><rect width="16" height="13" rx="2" fill="#1472d8" /><path d="M2.500 4h11M2.500 6.500h11M4 9.500h8" stroke="#fff" strokeDasharray="1.500 1" /></svg>
          </SogouCell>
          <SogouCell>
            <svg width="16" height="15" viewBox="0 0 16 15"><path d="M0 2l4-2h8l4 2-1 5-2-1v9H3V6L1 7z" fill="#7d6ee6" /></svg>
          </SogouCell>
          <SogouCell>
            <svg width="17" height="15" viewBox="0 0 17 15"><rect y="3" width="17" height="12" rx="6" fill="#1472d8" /><path d="M8.500 0v3" stroke="#1472d8" /><circle cx="5" cy="9" r="1.500" fill="#fff" /><circle cx="12" cy="9" r="1.500" fill="#fff" /></svg>
          </SogouCell>
          <SogouCell>
            <svg width="14" height="14" viewBox="0 0 14 14" fill="#1472d8"><rect width="6" height="6" rx="1.500" /><rect x="8" width="6" height="6" rx="1.500" /><rect y="8" width="6" height="6" rx="1.500" /><rect x="8" y="8" width="6" height="6" rx="1.500" /></svg>
          </SogouCell>
          <SogouCell>
            <svg width="14" height="15" viewBox="0 0 14 15"><path d="M7 0l6.500 3.500v8L7 15 .5 11.500v-8z" fill="#1472d8" /><circle cx="7" cy="7" r="2.500" fill="#fff" /><path d="M7 8v6" stroke="#fff" /></svg>
          </SogouCell>
        </Sogou>
      </Status>
    </App_>
  );
}
